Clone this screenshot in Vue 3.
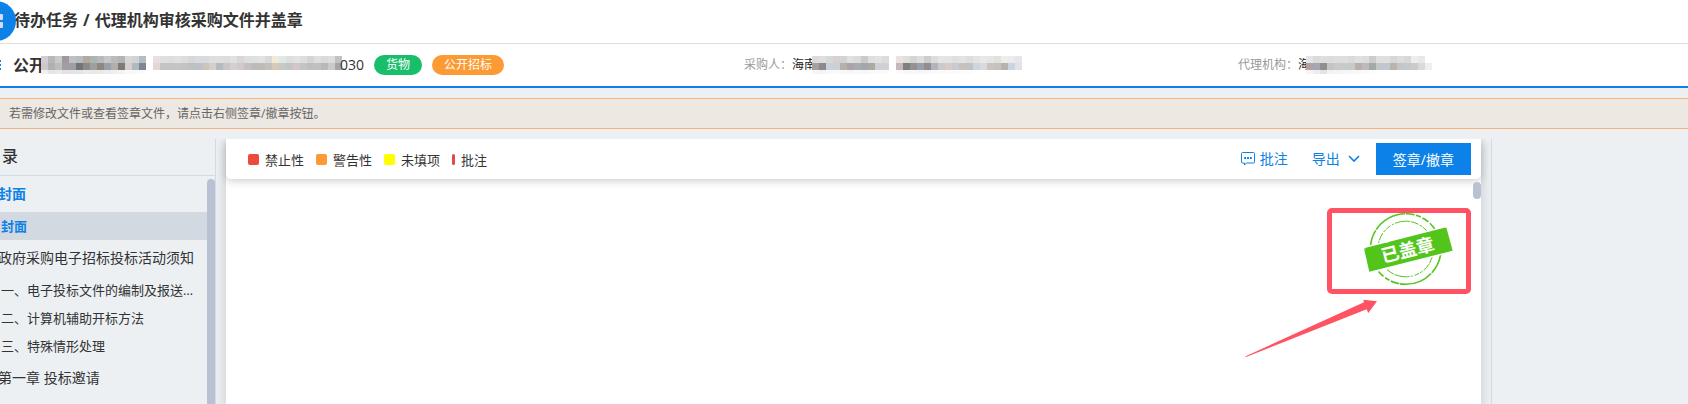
<template>
  <div class="page">
    <header class="topbar">
      <button class="logo" type="button" aria-label="菜单">
        <svg viewBox="0 0 40 40" width="40" height="40">
          <circle cx="20" cy="20" r="20" fill="#0c82e8" />
          <g fill="#d9d8fb">
            <rect x="13" y="13" width="6" height="6" rx="1" />
            <rect x="21" y="13" width="6" height="6" rx="1" />
            <rect x="13" y="21" width="6" height="6" rx="1" />
            <rect x="21" y="21" width="6" height="6" rx="1" />
          </g>
        </svg>
      </button>
      <h1 class="crumbs">
        <span>待办任务</span>
        <span>/</span>
        <span>代理机构审核采购文件并盖章</span>
      </h1>
    </header>

    <section class="info">
      <div class="info-cell">
        <span class="info-mark"></span>
        <strong class="project">公开</strong>
        <span v-for="(block, i) in masks.project" :key="i" class="mask">
          <span v-for="(row, r) in block" :key="r" class="mask-row">
            <i v-for="(c, n) in row" :key="n" :style="{ background: c }"></i>
          </span>
        </span>
        <span class="code">030</span>
        <span class="tag tag--green">货物</span>
        <span class="tag tag--orange">公开招标</span>
      </div>
      <div class="info-cell">
        <span class="label">采购人：</span>
        <span class="value">海南</span>
        <span v-for="(block, i) in masks.buyer" :key="i" class="mask">
          <span v-for="(row, r) in block" :key="r" class="mask-row">
            <i v-for="(c, n) in row" :key="n" :style="{ background: c }"></i>
          </span>
        </span>
      </div>
      <div class="info-cell">
        <span class="label">代理机构：</span>
        <span class="value">海</span>
        <span v-for="(block, i) in masks.agency" :key="i" class="mask">
          <span v-for="(row, r) in block" :key="r" class="mask-row">
            <i v-for="(c, n) in row" :key="n" :style="{ background: c }"></i>
          </span>
        </span>
      </div>
    </section>

    <p class="notice">若需修改文件或查看签章文件，请点击右侧签章/撤章按钮。</p>

    <div class="workspace">
      <aside class="sidebar">
        <h2 class="sidebar-title">目录</h2>
        <div class="sidebar-body">
          <nav class="toc">
            <a
              v-for="(item, i) in toc"
              :key="i"
              href="#"
              :class="['toc-item', `toc-item--${item.level}`, { 'is-bold': item.blue, 'is-active': item.active, 'is-spaced': item.spaced }]"
              @click.prevent
            >{{ item.text }}</a>
          </nav>
          <div class="sidebar-thumb"></div>
        </div>
      </aside>

      <main class="viewer">
        <div class="toolbar">
          <ul class="legend">
            <li v-for="item in legend" :key="item.text">
              <span :class="['swatch', `swatch--${item.type}`]"></span>{{ item.text }}
            </li>
          </ul>
          <div class="actions">
            <button class="link-button" type="button">
              <svg viewBox="0 0 14 14" width="14" height="14" fill="none" stroke="#0c82e8">
                <path d="M1.5 .5h11a1 1 0 0 1 1 1v8.500a1 1 0 0 1-1 1H5.500L3.500 13v-2h-2a1 1 0 0 1-1-1v-8.500a1 1 0 0 1 1-1z" />
                <path d="M3.200 6h1.800M6.100 6h1.800M9 6h1.800" stroke-width="1.800" />
              </svg>
              批注
            </button>
            <button class="link-button link-button--menu" type="button">
              导出
              <svg viewBox="0 0 12 8" width="12" height="8" fill="none" stroke="#0c82e8" stroke-width="1.600">
                <path d="M1 1l5 5 5-5" />
              </svg>
            </button>
            <button class="seal-button" type="button">签章/撤章</button>
          </div>
        </div>

        <div class="document">
          <div class="document-thumb"></div>
          <svg class="stamp" viewBox="0 0 92 78" width="92" height="78">
            <g fill="none" stroke="#52c41a">
              <circle cx="43.700" cy="39" r="35.300" stroke-width="1.600" stroke-dasharray="26 1 34 .8 9 1.500 5 2 7 2 10 1.500 3 1.500" />
              <circle cx="43.700" cy="39" r="27.800" stroke-width="1" stroke-dasharray="15 1 8 1.500 3 1 5 2 2 1.500" />
            </g>
            <path d="M2 38.300L84.300 17.300L90.700 40.700L7.300 61.700z" fill="#52c41a" stroke="#fff" stroke-width="3" paint-order="stroke" />
            <path d="M2 38.300l1.500 1M83 16.800l1.500 1.500M88.500 42l1-1.200M24 32.500l3-.8M44 55l5-1.200" stroke="#fff" stroke-width=".7" />
            <text x="45.700" y="46.500" text-anchor="middle" transform="rotate(-14 45.700 40)">已盖章</text>
          </svg>
          <div class="highlight"></div>
          <svg class="arrow" viewBox="0 0 133 58" width="133" height="58">
            <path d="M0 57.500L119 3.300L118.300.700L132 2.300L123.300 14L121.700 10.300L1 58z" fill="#ff5262" />
          </svg>
        </div>
      </main>

      <aside class="side-panel"></aside>
    </div>
  </div>
</template>

<script setup>
const toRow = colors => colors.split(' ').map(c => (c === '-' ? 'transparent' : `#${c}`))

// Each block is a stack of rows, one colour per 7px cell
const masks = {
  project: [
    [
      toRow('cfcfd0 b7b9b8 c9cbcb 9f97a2 bfc0c5 b9bcbd b3a99f aeb4b1 b8babd c4c8c8 b8bcbd b0b5b6 dad7d2 cfd4d6 b5bcc2'),
      toRow('cbcac9 b2b1b1 bebcbc a59ca5 9e9fa0 747477 8b8a8e 9da19d 92877d 9aa0aa b3adad 827976 d4d0cb aeb9c1 7f8691'),
      toRow('f0f0f0 e5e5e5 e8e8e8 e4e0e4 e3e3e3 e5e5e5 ebebeb e8e8e8 e9e9e9 ececee efefef f3f3f3 f8f8f8 f9f9f9 fbfbfb')
    ],
    [
      toRow('e9dfe2 e0dfe3 dedede e0e0df dfdcde d8d7d6 d8dce0 d7dade dedddf dfdfdf dddddc dfe2e5 dcd5d5 dfdede dedfdf e4e2df d9d9d9 f3e9d5 dfe8e8 dcdfda e4e1e3 dedede d4d6d6 e0dfdc dadada dcdddf c3c1c7'),
      toRow('e3d7d6 c5c3c7 c5c4c4 c7c5c2 c4c2c5 bfc0c3 bcc1c9 cbc4bd d5cfc8 b7bbc0 c9c6c7 d2cfcd d5c8ca c3c1c2 bdbcbb bbbbba c5c0bd d7cab8 c3cac9 c2c6c2 d1c7cc c4c4c5 bec0c0 c1bfbf b6b8bb cbc9c9 aaa4aa'),
      toRow('-')
    ]
  ],
  buyer: [
    [
      toRow('dcdada dfdfdf d5d9dc d9cfd0 d0d3d7 e1e0df d8dcda c9cac9 dfdfdf e4e1df dadcdd'),
      toRow('a5a1a1 8b8b8c ccd1d9 ccd1d8 b7afad aba3a8 a8abb0 a2a7aa aaa9a4 cdd0d7 d1d0d4'),
      toRow('f6f6f6 f4f4f4 f8f8f8 fafafa f8f8f8 f7f7f7 f9f9f9 f7f7f7 fafafa fafafa fbfbfb')
    ],
    [
      toRow('ebe1df dfdfdf d5d5d4 dedede cccdcf dfdcda e5e5e5 e2e3e3 dfdfdf e5e3e2 dedede e5e3e0 e6e9ec e6e5e4 e0e0df efedea ebebec e6e6ea'),
      toRow('c4bab9 7f7f81 93928e 999fab 918d91 b1b5bd cbc9c8 d6cbc6 cacace c4c1c1 c4c3bf ccd6e0 dad9dd c7c5be c6c2bd b9b1aa cbd5df e2e1e7'),
      toRow('fafafa f7f7f7 f8f8f8 f7f7f7 f8f8f8 fafafa fbfbfb fbfbfb fbfbfb fcfcfc fcfcfc')
    ]
  ],
  agency: [
    [
      toRow('e4e5e6 d8dadb dcdedf dddddc dfdedd dedede d7dbde e1dfdf dddddc cbcdcc e0dfde dce0e2 d8d7d5 dedddc d7d9d8 efeded e8e8eb -'),
      toRow('b0a2a6 a4a8b0 908e8e c3c6c5 cacaca c8cac8 c9c9cb b7b1a9 bdbab9 a4a8a6 c6c6c8 bfc8d1 b9b3ad c4c5c4 c5c9c9 cdcac8 dad9dc efeff3'),
      toRow('f8f5f5 ecedef e4e4e4 f1f2f4 f3f4f5 f5f6f7 f7f7f7 f8f8f8 fafafa fcfcfc')
    ]
  ]
}

const toc = [
  { text: '封面', level: 1, blue: true },
  { text: '封面', level: 2, blue: true, active: true, spaced: true },
  { text: '政府采购电子招标投标活动须知', level: 1 },
  { text: '一、电子投标文件的编制及报送要求', level: 2, spaced: true },
  { text: '二、计算机辅助开标方法', level: 2 },
  { text: '三、特殊情形处理', level: 2 },
  { text: '第一章 投标邀请', level: 1 },
  { text: '一、招标项目简介', level: 2, spaced: true }
]

const legend = [
  { text: '禁止性', type: 'forbid' },
  { text: '警告性', type: 'warn' },
  { text: '未填项', type: 'empty' },
  { text: '批注', type: 'note' }
]
</script>

<style>
body {
  background: #ecf0f3;
}
</style>

<style scoped>
.page {
  display: flex;
  flex-direction: column;
  height: 100vh;
  overflow: hidden;
  font-family: 'Open Sans', 'Noto Sans CJK SC', sans-serif;
  color: #333;
}

button {
  font-family: inherit;
  border: 0;
  padding: 0;
  background: none;
  cursor: pointer;
}

/* Header */
.topbar {
  position: relative;
  flex: none;
  display: flex;
  align-items: center;
  height: 40px;
  padding: 0 14px 3px;
  background: #fff;
  border-bottom: 1px solid #dfdfdf;
}

.logo {
  position: absolute;
  left: -24px;
  top: 1px;
  height: 40px;
}

.crumbs {
  display: flex;
  gap: 5px;
  margin: 0;
  font-size: 16px;
  line-height: 24px;
  font-weight: 700;
}

/* Project info */
.info {
  flex: none;
  display: grid;
  grid-template-columns: 744fr 494fr 450fr;
  height: 42px;
  background: #fff;
  border-bottom: 2px solid #0c82e8;
}

.info-cell {
  display: flex;
  align-items: center;
  white-space: nowrap;
  min-width: 0;
  font-size: 12px;
  line-height: 20px;
}

.info-mark {
  width: 1px;
  height: 10px;
  margin-right: 12px;
  background: repeating-linear-gradient(#0c82e8 0 2px, #fff 2px 4px);
}

.project {
  font-size: 16px;
  font-weight: 700;
}

.mask {
  margin-left: -4px;
}

.mask + .mask {
  margin-left: 7px;
}

.mask-row {
  display: flex;
  height: 7px;
}

.mask-row:last-child {
  height: 4px;
}

.mask-row i {
  width: 7px;
}

.code {
  margin-left: -2px;
  font-size: 14px;
}

.tag {
  margin-left: 10px;
  padding: 0 12px;
  border-radius: 10px;
  color: #fff;
}

.tag--green {
  background: #19be6b;
}

.tag--orange {
  background: #fc9a34;
}

.label {
  color: #999;
}

.value {
  color: #222;
}

/* Notice */
.notice {
  flex: none;
  margin: 10px 0;
  padding: 0 9px;
  border: solid #f9b27c;
  border-width: 1px 0;
  background: #ede8e2;
  color: #666;
  font-size: 12px;
  line-height: 29px;
}

/* Workspace */
.workspace {
  flex: 1;
  display: flex;
  gap: 10px;
  min-height: 0;
}

.sidebar {
  flex: none;
  display: flex;
  flex-direction: column;
  box-sizing: border-box;
  width: 216px;
  border-right: 1px solid #d3dae6;
}

.sidebar-title {
  flex: none;
  margin: 0;
  padding-bottom: 2px;
  text-indent: -14px;
  font-size: 16px;
  font-weight: 500;
  line-height: 34px;
  border-bottom: 1px solid #d3dae6;
}

.sidebar-body {
  flex: 1;
  display: flex;
  min-height: 0;
}

.toc {
  flex: 1;
  min-width: 0;
  overflow: hidden;
}

.toc-item {
  display: block;
  margin-top: 4px;
  padding-right: 12px;
  overflow: hidden;
  color: #333;
  line-height: 28px;
  text-decoration: none;
  text-overflow: ellipsis;
  white-space: nowrap;
}

.toc-item--1 {
  font-size: 14px;
  text-indent: -2px;
}

.toc-item--2 {
  margin-top: 0;
  font-size: 13px;
  padding-left: 1px;
}

.is-spaced {
  margin-top: 4px;
}

.is-bold {
  color: #0c82e8;
  font-weight: 700;
}

.is-active {
  background: #d3d9e0;
}

.sidebar-thumb {
  width: 8px;
  margin-top: 3px;
  border-radius: 4px 4px 0 0;
  background: #b8c2d2;
}

/* Viewer */
.viewer {
  flex: 1;
  display: flex;
  flex-direction: column;
  min-width: 0;
  background: #fff;
  box-shadow: 0 4px 12px rgba(0, 0, 0, 0.16);
  clip-path: inset(0 -10px);
}

.toolbar {
  position: relative;
  flex: none;
  display: flex;
  align-items: center;
  justify-content: space-between;
  height: 40px;
  padding: 0 10px 0 22px;
  background: #fff;
  border-radius: 0 0 5px 5px;
  box-shadow: 0 2px 8px rgba(0, 0, 0, 0.2);
}

.legend {
  display: flex;
  gap: 12px;
  margin: 0;
  padding: 0;
  list-style: none;
  font-size: 13px;
}

.legend li {
  display: flex;
  align-items: center;
}

.swatch {
  width: 11px;
  height: 11px;
  margin-right: 6px;
  border-radius: 2px;
}

.swatch--forbid {
  background: #ed4a3d;
}

.swatch--warn {
  background: #fc9a34;
}

.swatch--empty {
  background: #ffff00;
}

.swatch--note {
  width: 3px;
  background: #dc4b4b;
}

.actions {
  display: flex;
  align-items: center;
}

.link-button {
  display: flex;
  align-items: center;
  gap: 5px;
  margin-right: 24px;
  color: #0c82e8;
  font-size: 14px;
  line-height: 20px;
}

.link-button--menu {
  gap: 8px;
  margin-right: 16px;
}

.seal-button {
  height: 32px;
  padding: 0 17px;
  background: #0c82e8;
  color: #fff;
  font-size: 14px;
}

.document {
  position: relative;
  flex: 1;
}

.document-thumb {
  position: absolute;
  right: 0;
  top: 3px;
  width: 8px;
  height: 17px;
  border-radius: 4px;
  background: #b8c2d2;
}

.stamp {
  position: absolute;
  right: 27px;
  top: 31px;
}

.stamp text {
  fill: #fff;
  font-size: 18px;
  font-weight: 700;
}

.highlight {
  position: absolute;
  right: 10px;
  top: 29px;
  box-sizing: border-box;
  width: 144px;
  height: 86px;
  border: 5px solid #ff5262;
  border-radius: 5px;
}

.arrow {
  position: absolute;
  right: 103px;
  top: 120px;
}

.side-panel {
  flex: none;
  box-sizing: border-box;
  width: 197px;
  border-left: 1px solid #d3dae6;
}
</style>
